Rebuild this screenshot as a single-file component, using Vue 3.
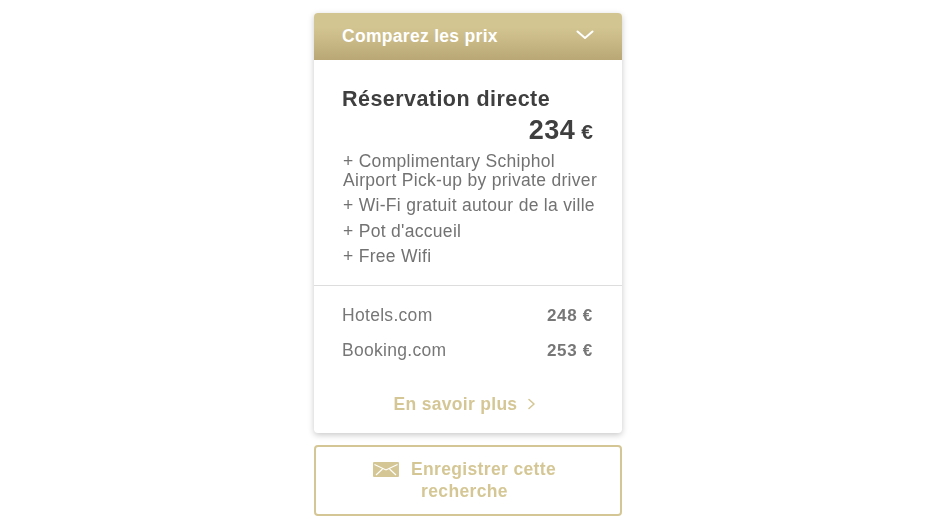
<script setup>
const perks = [
  "+ Complimentary Schiphol Airport Pick-up by private driver",
  "+ Wi-Fi gratuit autour de la ville",
  "+ Pot d'accueil",
  "+ Free Wifi",
];
const others = [
  { name: "Hotels.com", price: "248 €" },
  { name: "Booking.com", price: "253 €" },
];
</script>

<template>
  <div class="page">
    <div class="column">
      <section class="card">
        <header class="head">
          <span class="head-title">Comparez les prix</span>
          <svg class="chev" width="18" height="10" viewBox="0 0 18 10">
            <path d="M1.5 1.5 L9 8 L16.5 1.5" fill="none" stroke="#fff" stroke-width="2" stroke-linecap="round" stroke-linejoin="round" />
          </svg>
        </header>
        <div class="direct">
          <h2 class="direct-title">Réservation directe</h2>
          <div class="price"><span class="amount">234</span><span class="cur">€</span></div>
          <ul class="perks">
            <li v-for="p in perks" :key="p">{{ p }}</li>
          </ul>
        </div>
        <div class="others">
          <div v-for="o in others" :key="o.name" class="row">
            <span>{{ o.name }}</span>
            <b>{{ o.price }}</b>
          </div>
          <a class="more">
            <span>En savoir plus</span>
            <svg width="9" height="12" viewBox="0 0 9 12">
              <path d="M2 1.5 L7 6 L2 10.5" fill="none" stroke="#d5c795" stroke-width="1.6" stroke-linecap="round" stroke-linejoin="round" />
            </svg>
          </a>
        </div>
      </section>
      <button class="save">
        <span class="save-first">
          <svg width="26" height="15" viewBox="0 0 26 15">
            <rect width="26" height="15" rx="1" fill="#d5c795" />
            <path d="M1.5 2.5 L13 8 L24.5 2.5 M3 13 L9.5 7 M23 13 L16.5 7" fill="none" stroke="#fff" stroke-width="1.1" />
          </svg>
          <span>Enregistrer cette</span>
        </span>
        <span class="save-second">recherche</span>
      </button>
    </div>
  </div>
</template>

<style scoped>
.page {
  width: 929px;
  height: 523px;
  overflow: hidden;
  background: #fff;
  display: flex;
  justify-content: center;
  font-family: "Liberation Sans", Arial, sans-serif;
}
.column {
  width: 308px;
  margin-left: 7px;
  padding-top: 13px;
  display: flex;
  flex-direction: column;
  gap: 12px;
  filter: blur(0.3px);
}
.card {
  height: 420px;
  box-sizing: border-box;
  border-radius: 4px;
  background: #fff;
  box-shadow: 0 2px 6px rgba(0, 0, 0, 0.22);
  display: flex;
  flex-direction: column;
}
.head {
  height: 47px;
  flex: none;
  border-radius: 4px 4px 0 0;
  background: linear-gradient(#d3c592 30%, #b9a875);
  display: flex;
  justify-content: space-between;
  padding: 0 28px;
  box-sizing: border-box;
  color: #fff;
}
.head-title {
  font-size: 17.5px;
  letter-spacing: 0.3px;
  font-weight: 700;
  line-height: 47px;
}
.chev {
  margin-top: 17px;
}
.direct {
  height: 226px;
  flex: none;
  box-sizing: border-box;
  padding: 27px 28px 0;
  border-bottom: 1px solid #ddd;
}
.direct-title {
  margin: 0;
  font-size: 21.5px;
  line-height: 24px;
  font-weight: 700;
  letter-spacing: 0.45px;
  color: #3f3f3f;
}
.price {
  display: flex;
  justify-content: flex-end;
  align-items: baseline;
  gap: 6px;
  margin-top: 4px;
  padding-right: 1px;
  color: #3f3f3f;
  font-weight: 700;
  line-height: 30px;
}
.amount {
  font-size: 27px;
  letter-spacing: 0.5px;
}
.cur {
  font-size: 21px;
}
.perks {
  list-style: none;
  margin: 5px -6px 0 0;
  padding: 0 0 0 1px;
  font-size: 17.5px;
  letter-spacing: 0.3px;
  line-height: 19px;
  color: #727272;
}
.perks li {
  margin-bottom: 6px;
}
.perks li:nth-child(2) {
  margin-bottom: 7px;
}
.others {
  flex: 1;
  padding: 18px 29px 0 28px;
  color: #777;
}
.row {
  display: flex;
  justify-content: space-between;
  align-items: baseline;
  font-size: 17.5px;
  letter-spacing: 0.3px;
  line-height: 22px;
  margin-bottom: 12px;
}
.row b {
  font-size: 17px;
  letter-spacing: 0.7px;
}
.more {
  display: flex;
  justify-content: center;
  align-items: center;
  gap: 10px;
  margin-top: 31px;
  margin-left: -5px;
  font-size: 17.5px;
  letter-spacing: 0.3px;
  font-weight: 700;
  line-height: 22px;
  color: #d5c795;
}
.save {
  height: 71px;
  box-sizing: border-box;
  padding: 0 0 2px;
  border: 2px solid #d5c795;
  border-radius: 4px;
  background: #fff;
  color: #d5c795;
  font-family: inherit;
  font-size: 17.5px;
  font-weight: 700;
  letter-spacing: 0.35px;
  line-height: 22px;
  display: flex;
  flex-direction: column;
  align-items: center;
  justify-content: center;
}
.save-first {
  display: flex;
  align-items: center;
  gap: 12px;
  margin-left: -7px;
}
.save-first svg {
  margin-top: 2px;
}
.save-second {
  margin-left: -7px;
}
</style>
